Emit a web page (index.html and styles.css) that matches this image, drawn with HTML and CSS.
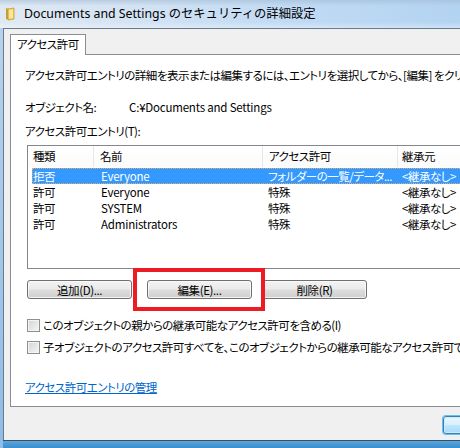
FILE: index.html
```html
<!DOCTYPE html>
<html lang="ja">
<head>
<meta charset="utf-8">
<title>セキュリティの詳細設定</title>
<link rel="stylesheet" href="styles.css">
</head>
<body>
<div class="window">
  <div class="titlebar">
    <svg class="folder" width="10" height="14" viewBox="0 0 10 14">
      <path d="M1 1 L4 2 L4 13 L1 12 Z" fill="#c9a030"/>
      <path d="M3 2 L9 1 L9 12 L3 13 Z" fill="#f3d36b" stroke="#c69a2c" stroke-width="0.8"/>
      <path d="M4 3 L8 2.4 L8 11 L4 11.6 Z" fill="#fbe79c"/>
    </svg>
    <span class="title">Documents and Settings のセキュリティの詳細設定</span>
  </div>
  <div class="client">
    <div class="tabs"><div class="tab">アクセス許可</div></div>
    <div class="page">
      <div class="line desc">アクセス許可エントリの詳細を表示または編集するには、エントリを選択してから、[編集] をクリックします。</div>
      <div class="line objrow"><span class="objlabel">オブジェクト名:</span><span class="latin">C:¥Documents and Settings</span></div>
      <div class="line entries">アクセス許可エントリ(T):</div>
      <div class="list">
        <div class="lhead">
          <div class="hc c1">種類</div>
          <div class="hc c2">名前</div>
          <div class="hc c3">アクセス許可</div>
          <div class="hc c4">継承元</div>
        </div>
        <div class="row selected"><div class="c1">拒否</div><div class="c2 latin">Everyone</div><div class="c3">フォルダーの一覧/データ...</div><div class="c4">&lt;継承なし&gt;</div></div>
        <div class="row"><div class="c1">許可</div><div class="c2 latin">Everyone</div><div class="c3">特殊</div><div class="c4">&lt;継承なし&gt;</div></div>
        <div class="row"><div class="c1">許可</div><div class="c2 latin">SYSTEM</div><div class="c3">特殊</div><div class="c4">&lt;継承なし&gt;</div></div>
        <div class="row"><div class="c1">許可</div><div class="c2 latin">Administrators</div><div class="c3">特殊</div><div class="c4">&lt;継承なし&gt;</div></div>
      </div>
      <div class="btnrow">
        <button class="btn">追加(D)...</button>
        <button class="btn">編集(E)...</button>
        <button class="btn">削除(R)</button>
      </div>
      <label class="chk first"><span class="box"></span><span>このオブジェクトの親からの継承可能なアクセス許可を含める(I)</span></label>
      <label class="chk second"><span class="box"></span><span>子オブジェクトのアクセス許可すべてを、このオブジェクトからの継承可能なアクセス許可で置き換える(P)</span></label>
      <a class="link" href="#">アクセス許可エントリの管理</a>
    </div>
    <div class="footer"><button class="btn default">OK</button></div>
  </div>
  <div class="frame-bottom"></div>
</div>
<div class="highlight"></div>
</body>
</html>
```
FILE: styles.css
```css
html, body {
  margin: 0;
  padding: 0;
}
body {
  width: 460px;
  height: 448px;
  overflow: hidden;
  position: relative;
  background: linear-gradient(to bottom, #b9d3ee, #8fbde6);
  font-family: "Noto Sans CJK JP", "Noto Sans", sans-serif;
  font-size: 11.5px;
  letter-spacing: -0.5px;
  font-feature-settings: "palt";
  color: #000;
}
.latin {
  letter-spacing: -0.2px;
}
.window {
  display: flex;
  flex-direction: column;
  width: 460px;
  height: 448px;
}
.titlebar {
  height: 28px;
  flex: none;
  display: flex;
  align-items: center;
  padding-left: 5px;
  box-sizing: border-box;
  background:
    linear-gradient(to bottom, rgba(160,185,210,0.55) 0px, rgba(255,255,255,0) 6px, rgba(255,255,255,0) 22px, rgba(255,255,255,0.35) 28px),
    linear-gradient(to right, #dfe9f3 0%, #d3e3f3 30%, #c4dcf4 55%, #b3d3f2 100%);
}
.folder {
  flex: none;
  margin-right: 9px;
  margin-top: -1px;
}
.title {
  font-family: "Noto Sans", "Noto Sans CJK JP", sans-serif;
  font-size: 12.3px;
  letter-spacing: 0;
  font-feature-settings: normal;
  color: #000;
  white-space: nowrap;
  line-height: 16px;
}
.client {
  flex: none;
  height: 412px;
  box-sizing: border-box;
  margin-left: 3px;
  width: 457px;
  border-top: 1px solid #6a7a8a;
  border-left: 1px solid #6a7a8a;
  background: #f0f0f0;
  overflow: hidden;
  display: flex;
  flex-direction: column;
}
.tabs {
  padding: 5px 0 0 6px;
  display: flex;
  flex: none;
}
.tab {
  position: relative;
  z-index: 1;
  width: 76px;
  height: 21px;
  box-sizing: border-box;
  border: 1px solid #898c95;
  border-bottom: none;
  background: #fff;
  padding-left: 6px;
  line-height: 19px;
  margin-bottom: -1px;
  white-space: nowrap;
}
.page {
  flex: none;
  margin-left: 6px;
  width: 470px;
  height: 353px;
  box-sizing: border-box;
  border: 1px solid #898c95;
  background: #fff;
  padding: 13px 0 0 14px;
  display: flex;
  flex-direction: column;
  align-items: flex-start;
}
.line {
  height: 14px;
  line-height: 14px;
  white-space: nowrap;
}
.objrow {
  margin-top: 18px;
  display: flex;
}
.objlabel {
  width: 104px;
}
.entries {
  margin-top: 10px;
}
.list {
  margin-top: 7px;
  margin-left: 2px;
  width: 460px;
  height: 124px;
  box-sizing: border-box;
  border: 1px solid #828790;
  flex: none;
  overflow: hidden;
}
.lhead {
  display: flex;
  height: 21px;
  margin-bottom: 1px;
  background: linear-gradient(to bottom, #ffffff, #fbfbfc);
}
.hc {
  flex: none;
  box-sizing: border-box;
  height: 21px;
  line-height: 21px;
  border-right: 1px solid #e3e6ea;
  white-space: nowrap;
}
.hc.c1 { width: 66px; padding-left: 5px; }
.hc.c2 { width: 169px; padding-left: 6px; }
.hc.c3 { width: 135px; padding-left: 6px; }
.hc.c4 { width: 100px; padding-left: 4px; border-right: none; }
.row {
  display: flex;
  height: 16px;
  line-height: 16px;
  margin-left: 4px;
  box-sizing: border-box;
  white-space: nowrap;
}
.row > div { flex: none; box-sizing: border-box; overflow: hidden; }
.row .c1 { width: 62px; padding-left: 1px; }
.row .c2 { width: 169px; padding-left: 7px; }
.row .c3 { width: 135px; padding-left: 5px; }
.row .c4 { width: 100px; padding-left: 4px; }
.row.selected {
  background: #3399ff;
  color: #fff;
  outline: 1px dotted #e9a86a;
  outline-offset: -1px;
}
.btnrow {
  margin-top: 11px;
  margin-left: 2px;
  display: flex;
  gap: 10px;
}
.btn {
  font-family: "Noto Sans CJK JP", "Noto Sans", sans-serif;
  font-size: 11.5px;
  letter-spacing: -0.4px;
  font-feature-settings: "palt";
  width: 105px;
  height: 19px;
  padding: 0;
  line-height: 16px;
  border: 1px solid #707070;
  border-radius: 3px;
  color: #000;
  background: linear-gradient(to bottom, #f2f2f2 0%, #ebebeb 48%, #dddddd 52%, #cfcfcf 100%);
  box-shadow: inset 0 0 0 1px rgba(255,255,255,0.7);
}
.btnrow .btn:nth-child(2) { margin-left: 5px; }
.chk {
  display: flex;
  align-items: center;
  margin-left: 2px;
  height: 13px;
  line-height: 13px;
  white-space: nowrap;
}
.chk.first { margin-top: 20px; }
.chk.second { margin-top: 9px; }
.box {
  flex: none;
  width: 13px;
  height: 13px;
  box-sizing: border-box;
  border: 1px solid #8e8f8f;
  background: linear-gradient(135deg, #d4d4d4 0%, #e8e8e8 60%, #f6f6f6 100%);
  box-shadow: inset 0 0 0 1px #f4f4f4;
  margin-right: 3px;
}
.link {
  margin-top: 26px;
  line-height: 14px;
  color: #0066cc;
  text-decoration: underline;
  white-space: nowrap;
}
.footer {
  flex: none;
  padding: 9px 0 0 439px;
}
.btn.default {
  width: 75px;
  height: 18px;
  border-color: #3c7fb1;
  background: linear-gradient(to bottom, #eaf6fd 0%, #d9f0fc 48%, #bee6fd 52%, #a7d9f5 100%);
  box-shadow: 0 0 0 1px #62c1f0, inset 0 0 0 1px #c8ecfc;
  color: transparent;
}
.frame-bottom {
  flex: none;
  height: 8px;
  border-top: 1px solid #3b4f63;
  box-sizing: border-box;
  margin-left: 3px;
  background: linear-gradient(to bottom, #5aa6dc, #3b8dcf);
}
.highlight {
  position: absolute;
  left: 133px;
  top: 268px;
  width: 132px;
  height: 43px;
  box-sizing: border-box;
  border: 4px solid #ed1c24;
}
```
